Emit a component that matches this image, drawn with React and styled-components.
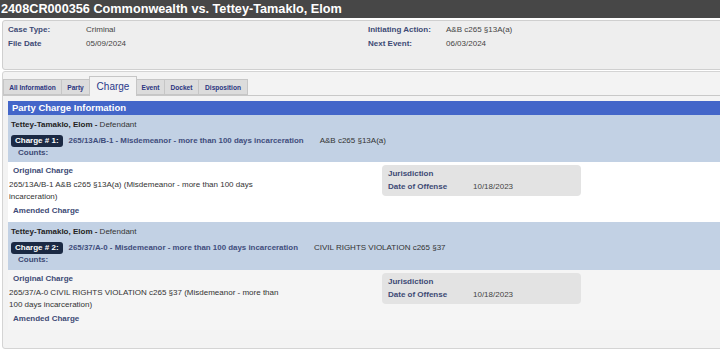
import React from 'react';
import styled, { createGlobalStyle } from 'styled-components';

const Global = createGlobalStyle`
  html, body { margin: 0; padding: 0; background: #fff; overflow: hidden; }
  body { font-family: "Liberation Sans", Arial, sans-serif; width: 720px; height: 351px; color: #333; }
`;

const Page = styled.div`
  width: 720px;
  height: 351px;
  overflow: hidden;
`;

const TitleBar = styled.h1`
  margin: 0;
  height: 18px;
  background: #474747;
  color: #fff;
  font-size: 12.7px;
  font-weight: bold;
  line-height: 18px;
  padding-left: 1px;
  white-space: nowrap;
`;

const InfoPanel = styled.div`
  box-sizing: border-box;
  width: 740px;
  margin: 2px 0 0 2px;
  height: 50px;
  border: 1px solid #cfcfcf;
  border-radius: 3px;
  background: #eeeeee;
  display: grid;
  grid-template-columns: 360px 1fr;
  padding: 1px 0 0 5px;
`;

const InfoColumn = styled.div`
  display: grid;
  grid-template-columns: 78px 1fr;
  grid-auto-rows: 14px;
  align-items: center;
  font-size: 8px;
`;

const Label = styled.span`
  font-weight: bold;
  color: #3d4a75;
`;

const Value = styled.span`
  color: #444;
`;

const TabbedBox = styled.div`
  box-sizing: border-box;
  width: 740px;
  margin: 1px 0 0 2px;
  border: 1px solid #d4d4d4;
  border-radius: 3px;
  background: #f3f3f3;
  padding: 4px 0 18px 0;
`;

const TabStrip = styled.div`
  display: flex;
  align-items: flex-end;
  height: 19px;
  border-bottom: 1px solid #c8c8c8;
`;

const Tab = styled.div`
  box-sizing: border-box;
  width: ${p => p.$w}px;
  height: ${p => (p.$active ? 20 : 16)}px;
  margin-bottom: ${p => (p.$active ? -1 : 0)}px;
  border: 1px solid #c6c6c6;
  border-bottom: ${p => (p.$active ? 'none' : '1px solid #c6c6c6')};
  margin-right: -1px;
  background: ${p => (p.$active ? '#f3f3f3' : '#dcdcdc')};
  color: ${p => (p.$active ? '#2a3a8a' : '#2b3580')};
  font-size: ${p => (p.$active ? '10px' : '6.6px')};
  font-weight: ${p => (p.$active ? 'normal' : 'bold')};
  display: flex;
  align-items: center;
  justify-content: center;
  padding-top: ${p => (p.$active ? 0 : 1)}px;
  white-space: nowrap;
  position: relative;
  z-index: ${p => (p.$active ? 1 : 0)};
`;

const ContentPanel = styled.div`
  margin: 5px 0 0 5px;
`;

const PanelHeader = styled.div`
  height: 14px;
  background: #4366c9;
  color: #fff;
  font-weight: bold;
  font-size: 9.5px;
  line-height: 14px;
  padding-left: 4px;
`;

const ChargeHead = styled.div`
  background: #c2d1e4;
  padding: 4px 3px ${p => p.$pb}px 3px;
  font-size: 8px;
`;

const NameLine = styled.div`
  line-height: 12px;
  color: #333;
  b { color: #222; }
`;

const BadgeRow = styled.div`
  margin-top: 3px;
  height: 13px;
  display: flex;
  align-items: center;
`;

const Badge = styled.span`
  background: #1b2a44;
  color: #fff;
  font-weight: bold;
  font-size: 8px;
  border-radius: 3px;
  padding: 0 4px;
  height: 12px;
  line-height: 12px;
`;

const ChargeDesc = styled.span`
  margin-left: 6px;
  color: #3f4d7c;
  font-weight: bold;
  font-size: 7.9px;
`;

const Statute = styled.span`
  margin-left: 16px;
  color: #333;
  font-size: 8px;
`;

const Counts = styled.div`
  margin-left: 7px;
  line-height: 12px;
  font-weight: bold;
  color: #3d4a75;
`;

const ChargeBody = styled.div`
  background: ${p => (p.$alt ? '#f5f5f5' : '#ffffff')};
  display: grid;
  grid-template-columns: 374px 199px;
  font-size: 8px;
  height: ${p => p.$h}px;
  box-sizing: border-box;
`;

const LeftCol = styled.div`
  padding-top: 3px;
`;

const SubHeading = styled.div`
  padding-left: 5px;
  line-height: 12px;
  font-weight: bold;
  color: #3d4a75;
  margin-top: ${p => p.$mt || 0}px;
`;

const Description = styled.div`
  padding-left: 1px;
  margin-top: 2px;
  width: 282px;
  line-height: 12px;
  color: #333;
`;

const InfoCard = styled.div`
  align-self: start;
  margin-top: 3px;
  background: #e3e3e3;
  border-radius: 4px;
  padding: 2px 6px 3px 6px;
  display: grid;
  grid-template-columns: 85px 1fr;
  grid-auto-rows: 13px;
  align-items: center;
`;

const charges = [
  {
    n: 1,
    code: '265/13A/B-1 - Misdemeanor - more than 100 days incarceration',
    statute: 'A&B c265 §13A(a)',
    original: '265/13A/B-1 A&B c265 §13A(a) (Misdemeanor - more than 100 days incarceration)',
  },
  {
    n: 2,
    code: '265/37/A-0 - Misdemeanor - more than 100 days incarceration',
    statute: 'CIVIL RIGHTS VIOLATION c265 §37',
    original: '265/37/A-0 CIVIL RIGHTS VIOLATION c265 §37 (Misdemeanor - more than 100 days incarceration)',
  },
];

const tabs = [
  { label: 'All Information', w: 59 },
  { label: 'Party', w: 29 },
  { label: 'Charge', w: 48, active: true },
  { label: 'Event', w: 29 },
  { label: 'Docket', w: 35 },
  { label: 'Disposition', w: 50 },
];

export default function App() {
  return (
    <Page>
      <Global />
      <TitleBar>2408CR000356 Commonwealth vs. Tettey-Tamaklo, Elom</TitleBar>
      <InfoPanel>
        <InfoColumn>
          <Label>Case Type:</Label>
          <Value>Criminal</Value>
          <Label>File Date</Label>
          <Value>05/09/2024</Value>
        </InfoColumn>
        <InfoColumn>
          <Label>Initiating Action:</Label>
          <Value>A&amp;B c265 §13A(a)</Value>
          <Label>Next Event:</Label>
          <Value>06/03/2024</Value>
        </InfoColumn>
      </InfoPanel>
      <TabbedBox>
        <TabStrip>
          {tabs.map(t => (
            <Tab key={t.label} $w={t.w} $active={t.active}>{t.label}</Tab>
          ))}
        </TabStrip>
        <ContentPanel>
          <PanelHeader>Party Charge Information</PanelHeader>
          {charges.map((c, i) => (
            <React.Fragment key={c.n}>
              <ChargeHead $pb={i === 0 ? 3 : 4}>
                <NameLine><b>Tettey-Tamaklo, Elom -</b> Defendant</NameLine>
                <BadgeRow>
                  <Badge>Charge # {c.n}:</Badge>
                  <ChargeDesc>{c.code}</ChargeDesc>
                  <Statute>{c.statute}</Statute>
                </BadgeRow>
                <Counts>Counts:</Counts>
              </ChargeHead>
              <ChargeBody $alt={i === 1} $h={60}>
                <LeftCol>
                  <SubHeading>Original Charge</SubHeading>
                  <Description>{c.original}</Description>
                  <SubHeading $mt={2}>Amended Charge</SubHeading>
                </LeftCol>
                <InfoCard>
                  <Label>Jurisdiction</Label>
                  <span />
                  <Label>Date of Offense</Label>
                  <Value>10/18/2023</Value>
                </InfoCard>
              </ChargeBody>
            </React.Fragment>
          ))}
        </ContentPanel>
      </TabbedBox>
    </Page>
  );
}
